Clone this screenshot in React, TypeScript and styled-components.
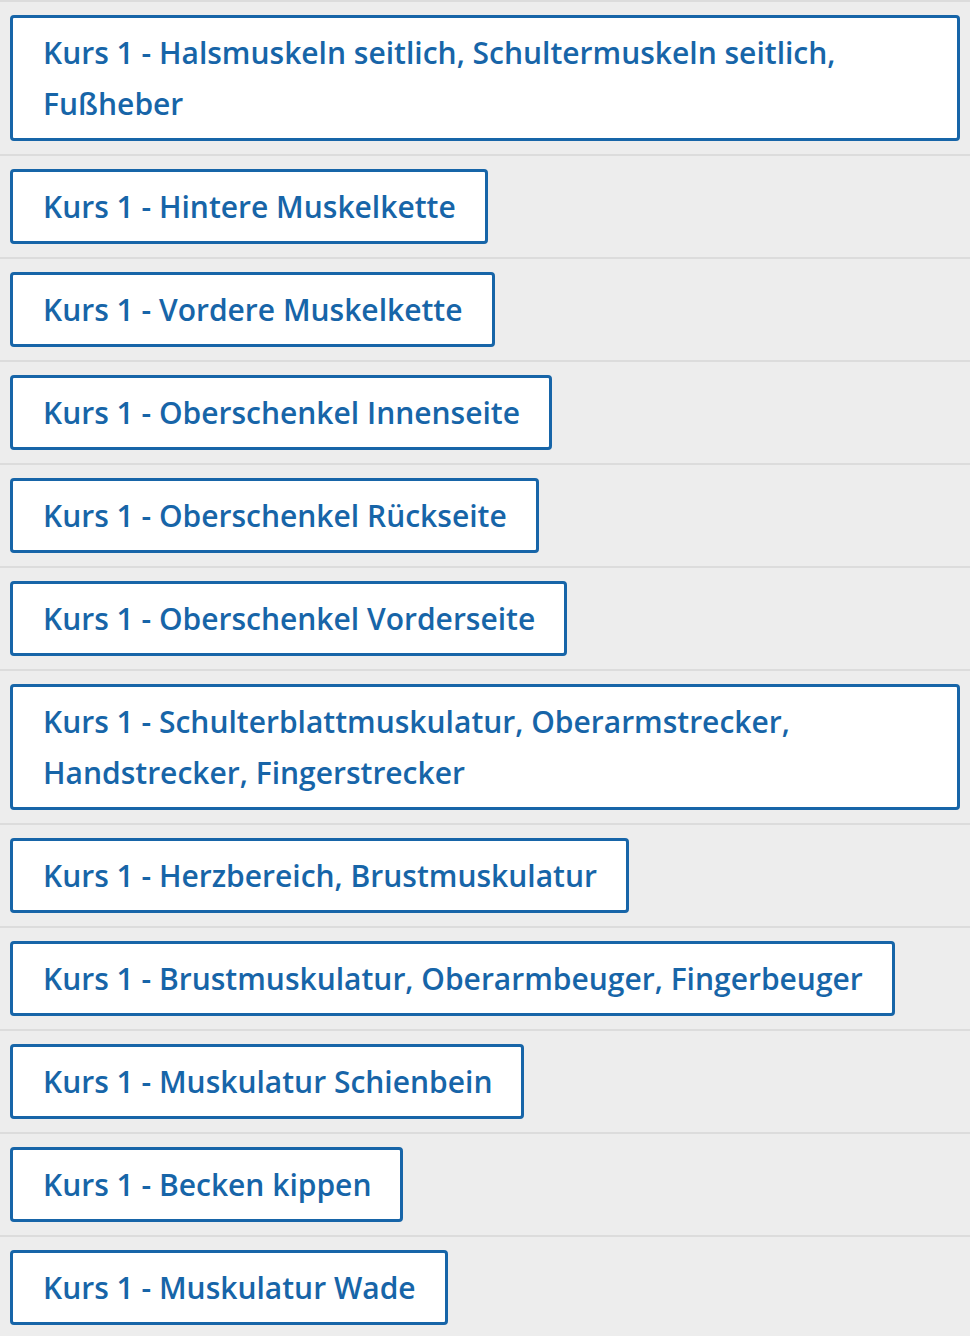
import styled, { createGlobalStyle } from "styled-components";

const courses = [
  "Kurs 1 - Halsmuskeln seitlich, Schultermuskeln seitlich, Fußheber",
  "Kurs 1 - Hintere Muskelkette",
  "Kurs 1 - Vordere Muskelkette",
  "Kurs 1 - Oberschenkel Innenseite",
  "Kurs 1 - Oberschenkel Rückseite",
  "Kurs 1 - Oberschenkel Vorderseite",
  "Kurs 1 - Schulterblattmuskulatur, Oberarmstrecker, Handstrecker, Fingerstrecker",
  "Kurs 1 - Herzbereich, Brustmuskulatur",
  "Kurs 1 - Brustmuskulatur, Oberarmbeuger, Fingerbeuger",
  "Kurs 1 - Muskulatur Schienbein",
  "Kurs 1 - Becken kippen",
  "Kurs 1 - Muskulatur Wade",
];

const GlobalStyle = createGlobalStyle`
  html, body {
    margin: 0;
    padding: 0;
    background: #ededed;
  }
  body {
    font-family: "Open Sans", "Noto Sans", sans-serif;
  }
`;

const CourseList = styled.div`
  display: flex;
  flex-direction: column;
  background: #ededed;
`;

const Row = styled.div`
  border-top: 2px solid #dcdcdc;
  padding: 13px 10px 13px 10px;
`;

const CourseButton = styled.a`
  display: inline-block;
  box-sizing: border-box;
  max-width: 100%;
  padding: 9px 29px 9px 30px;
  background: #fff;
  border: 3px solid #1765a8;
  border-radius: 4px;
  color: #1765a8;
  font-family: "Open Sans", "Noto Sans", sans-serif;
  font-size: 30px;
  font-weight: 600;
  line-height: 51px;
  text-decoration: none;
  cursor: pointer;
`;

export default function App() {
  return (
    <>
      <GlobalStyle />
      <CourseList>
        {courses.map((title) => (
          <Row key={title}>
            <CourseButton>{title}</CourseButton>
          </Row>
        ))}
      </CourseList>
    </>
  );
}
